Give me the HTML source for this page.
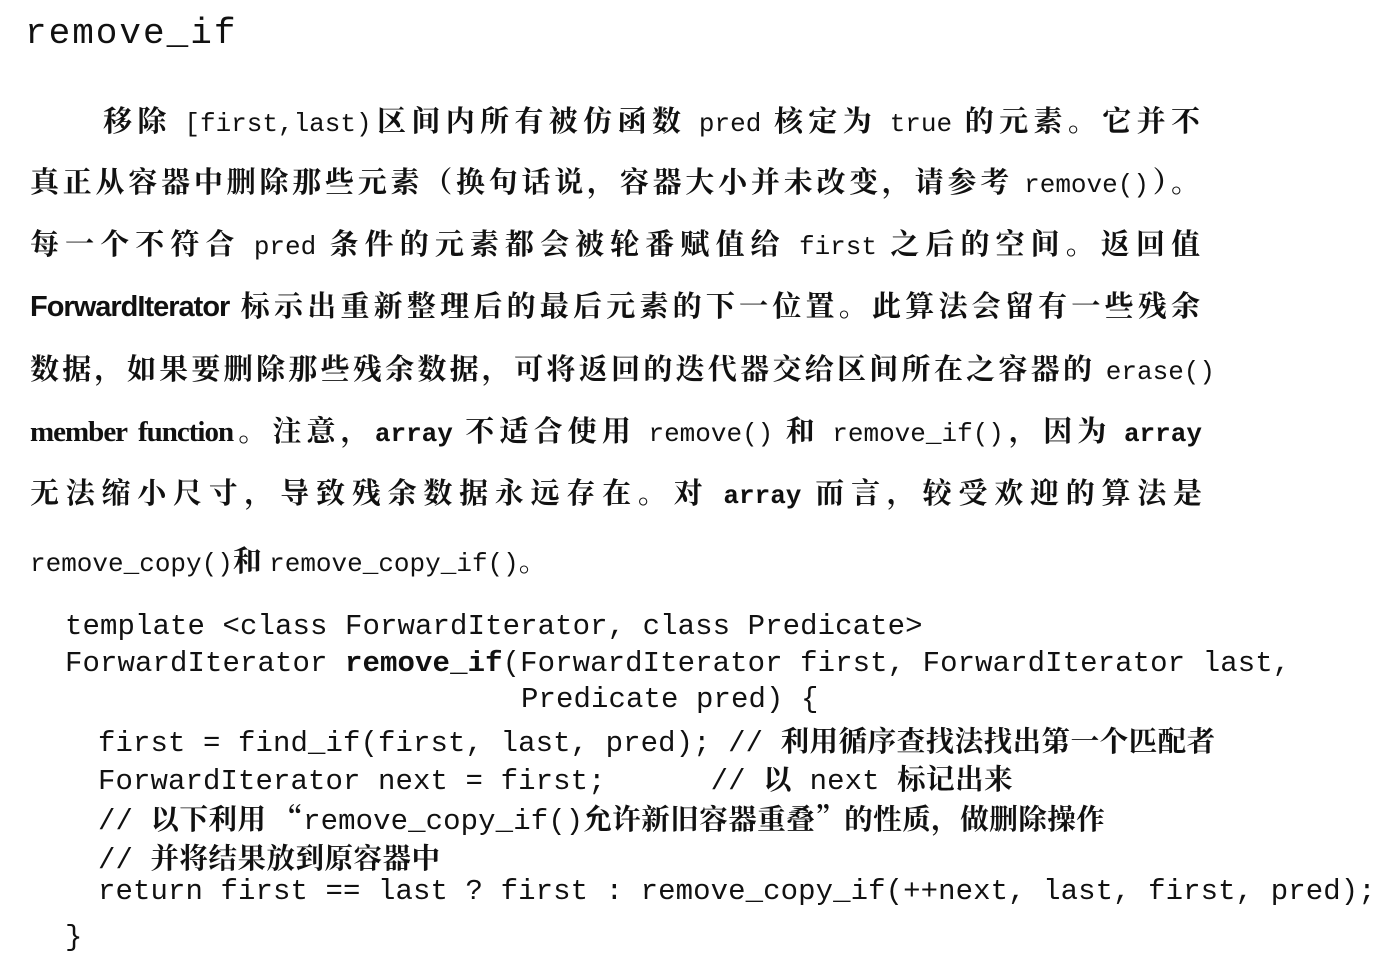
<!DOCTYPE html>
<html><head><meta charset="utf-8"><style>
body{margin:0;width:1400px;height:980px;background:#fff;position:relative;overflow:hidden;color:#111;font-family:"Liberation Serif","Noto Serif CJK SC",serif}
.l{position:absolute;white-space:nowrap;font-size:29px;line-height:36px;text-align:justify;text-align-last:justify;font-weight:bold}
.m{font-family:"Liberation Mono",monospace;font-weight:normal;font-size:26px}
.c{position:absolute;white-space:pre;font-family:"Liberation Mono",monospace;font-size:29px;line-height:36px;letter-spacing:0.1px}
.z{font-family:'Noto Serif CJK SC',serif;font-weight:bold;font-size:28.5px;letter-spacing:0.5px}
</style></head><body>
<div class="c" style="left:25px;top:16px;font-size:36px;letter-spacing:2px">remove_if</div>
<div class="l" style="left:103px;top:104px;width:1097px">移除 <span class="m">[first,last)</span>区间内所有被仿函数 <span class="m">pred</span> 核定为 <span class="m">true</span> 的元素。它并不</div>
<div class="l" style="left:30px;top:165px;width:1170px">真正从容器中删除那些元素（换句话说，容器大小并未改变，请参考 <span class="m">remove()</span>）。</div>
<div class="l" style="left:30px;top:227px;width:1170px">每一个不符合 <span class="m">pred</span> 条件的元素都会被轮番赋值给 <span class="m">first</span> 之后的空间。返回值</div>
<div class="l" style="left:30px;top:289px;width:1170px"><span style="font-family:'Liberation Sans';letter-spacing:-1px">ForwardIterator</span> 标示出重新整理后的最后元素的下一位置。此算法会留有一些残余</div>
<div class="l" style="left:30px;top:352px;width:1185px">数据，如果要删除那些残余数据，可将返回的迭代器交给区间所在之容器的 <span class="m">erase()</span></div>
<div class="l" style="left:30px;top:414px;width:1172px"><span style="letter-spacing:-1px">member function</span>。注意，<span class="m" style="font-weight:bold">array</span> 不适合使用 <span class="m">remove()</span> 和 <span class="m">remove_if()</span>，因为 <span class="m" style="font-weight:bold">array</span></div>
<div class="l" style="left:30px;top:476px;width:1172px">无法缩小尺寸，导致残余数据永远存在。对 <span class="m" style="font-weight:bold">array</span> 而言，较受欢迎的算法是</div>
<div class="l" style="left:30px;top:544px;text-align:left;text-align-last:left"><span class="m">remove_copy()</span>和 <span class="m">remove_copy_if()</span>。</div>
<div class="c" style="left:65px;top:609px">template &lt;class ForwardIterator, class Predicate&gt;</div>
<div class="c" style="left:65px;top:646px">ForwardIterator <b>remove_if</b>(ForwardIterator first, ForwardIterator last,</div>
<div class="c" style="left:521px;top:682px">Predicate pred) {</div>
<div class="c" style="left:98px;top:722px">first = find_if(first, last, pred); // <span class="z">利用循序查找法找出第一个匹配者</span></div>
<div class="c" style="left:98px;top:760px">ForwardIterator next = first;      // <span class="z">以</span> next <span class="z">标记出来</span></div>
<div class="c" style="left:98px;top:800px">// <span class="z">以下利用 “</span>remove_copy_if()<span class="z">允许新旧容器重叠”的性质，做删除操作</span></div>
<div class="c" style="left:98px;top:839px">// <span class="z">并将结果放到原容器中</span></div>
<div class="c" style="left:98px;top:874px">return first == last ? first : remove_copy_if(++next, last, first, pred);</div>
<div class="c" style="left:65px;top:920px">}</div>
</body></html>
